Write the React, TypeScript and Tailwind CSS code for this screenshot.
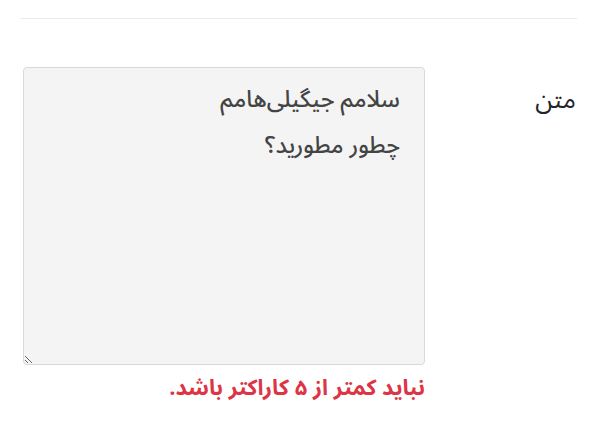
import React from "react";

export default function App() {
  return (
    <div
      dir="rtl"
      className="w-[599px] h-[422px] bg-white px-[23px] pt-[18px] font-['Noto_Sans_Arabic','DejaVu_Sans',sans-serif]"
    >
      <div className="border-t border-[#e9ecef] mr-[-1px] ml-[-3px]" />
      <div className="flex mt-[48px]">
        <div className="w-[151px] pt-[14px] pr-[0px] text-[25px] text-[#212529] leading-[38px]">
          متن
        </div>
        <div className="w-[402px]">
          <textarea
            dir="rtl"
            className="block w-[402px] h-[298px] resize-y bg-[#f4f4f4] border border-[#d9d9d9] rounded-[4px] px-[24px] py-[9px] text-[23px] font-medium leading-[46px] text-[#444] outline-none font-['Noto_Sans_Arabic','DejaVu_Sans',sans-serif]"
            defaultValue={"سلامم جیگیلی‌هامم\nچطور مطورید؟"}
          />
          <div className="mt-[7px] text-[22px] font-bold text-[#dc3545] leading-[32px]">
            نباید کمتر از ۵ کاراکتر باشد.
          </div>
        </div>
      </div>
    </div>
  );
}
